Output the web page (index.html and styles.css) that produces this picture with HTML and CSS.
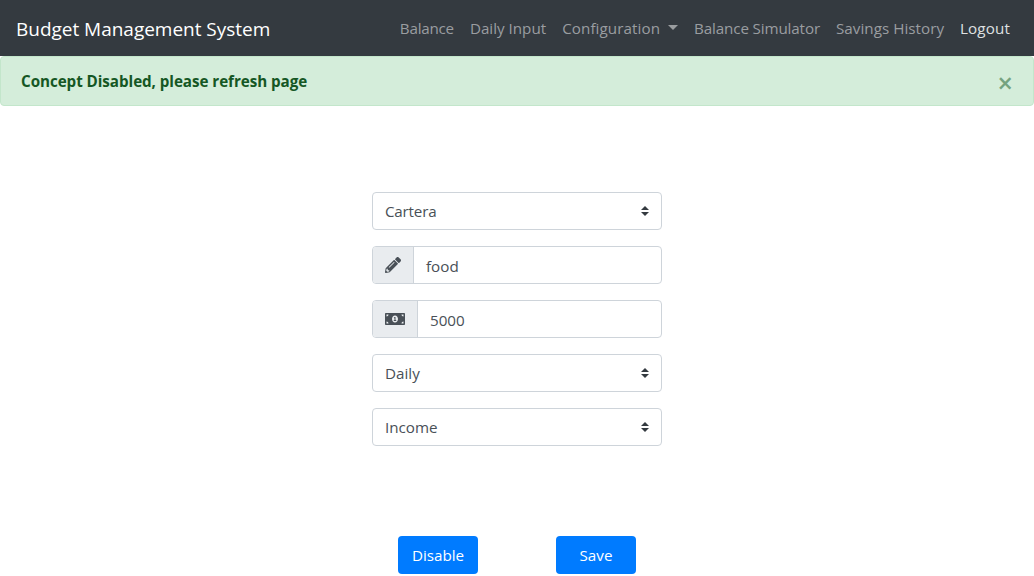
FILE: index.html
```
<!DOCTYPE html>
<html lang="en">
<head>
<meta charset="utf-8">
<title>Budget Management System</title>
<link rel="stylesheet" href="styles.css">
</head>
<body>
<nav class="navbar">
  <a class="brand">Budget Management System</a>
  <ul class="nav">
    <li class="balance">Balance</li>
    <li>Daily Input</li>
    <li class="dropdown">Configuration</li>
    <li class="simulator">Balance Simulator</li>
    <li class="savings">Savings History</li>
    <li class="active">Logout</li>
  </ul>
</nav>
<div class="alert"><strong>Concept Disabled, please refresh page</strong><span class="close">×</span></div>
<form class="form">
  <div class="control select"><span class="tight">Cartera</span><svg class="arrows" viewBox="0 0 4 5"><path d="M2 0L0 2h4zm0 5L0 3h4z"/></svg></div>
  <div class="control group"><span class="addon"><svg width="16" height="16" viewBox="0 0 512 512"><path d="M497.9 142.1l-46.1 46.1c-4.7 4.7-12.3 4.7-17 0l-111-111c-4.7-4.7-4.7-12.3 0-17l46.1-46.1c18.7-18.7 49.1-18.7 67.9 0l60.1 60.1c18.8 18.7 18.8 49.1 0 67.9zM284.2 99.8L21.6 362.4.4 483.9c-2.9 16.4 11.4 30.6 27.8 27.8l121.5-21.3 262.6-262.6c4.7-4.7 4.7-12.3 0-17l-111-111c-4.8-4.7-12.4-4.7-17.1 0zM124.1 339.9c-5.5-5.5-5.5-14.3 0-19.8l154-154c5.5-5.5 14.3-5.5 19.8 0s5.5 14.3 0 19.8l-154 154c-5.5 5.5-14.3 5.5-19.8 0zM88 424h48v36.3l-64.5 11.3-31.1-31.1L51.7 376H88v48z"/></svg></span><span class="value">food</span></div>
  <div class="control group"><span class="addon"><svg width="20" height="16" viewBox="0 0 640 512"><path d="M352 288h-16v-88c0-4.42-3.58-8-8-8h-13.58c-4.74 0-9.37 1.4-13.31 4.03l-15.33 10.22a7.994 7.994 0 0 0-2.22 11.09l8.88 13.31a7.994 7.994 0 0 0 11.09 2.22l.47-.31V288h-16c-4.42 0-8 3.58-8 8v16c0 4.42 3.58 8 8 8h64c4.42 0 8-3.58 8-8v-16c0-4.42-3.58-8-8-8zM608 64H32C14.33 64 0 78.33 0 96v320c0 17.67 14.33 32 32 32h576c17.67 0 32-14.33 32-32V96c0-17.67-14.33-32-32-32zM48 400v-64c35.35 0 64 28.65 64 64H48zm0-224v-64h64c0 35.35-28.65 64-64 64zm272 192c-53.02 0-96-50.15-96-112 0-61.86 42.98-112 96-112s96 50.13 96 112c0 61.87-43 112-96 112zm272 32h-64c0-35.35 28.65-64 64-64v64zm0-224c-35.35 0-64-28.65-64-64h64v64z"/></svg></span><span class="value">5000</span></div>
  <div class="control select"><span>Daily</span><svg class="arrows" viewBox="0 0 4 5"><path d="M2 0L0 2h4zm0 5L0 3h4z"/></svg></div>
  <div class="control select"><span>Income</span><svg class="arrows" viewBox="0 0 4 5"><path d="M2 0L0 2h4zm0 5L0 3h4z"/></svg></div>
  <div class="actions"><button type="button" class="btn">Disable</button><button type="button" class="btn">Save</button></div>
</form>
</body>
</html>
```
FILE: styles.css
```
* { box-sizing: border-box; }
body { margin: 0; background: #fff; color: #212529; font: 15.2px/24px "Open Sans", "Noto Sans", sans-serif; }

.navbar { display: flex; align-items: center; justify-content: space-between; height: 56px; padding: 0 16px; background: #343a40; }
.brand { padding-top: 2px; color: #fff; font-size: 19px; line-height: 30px; letter-spacing: -0.02px; white-space: nowrap; }
.nav { display: flex; margin: 0; padding: 0; list-style: none; color: #9a9da0; white-space: nowrap; }
.nav li { padding: 8px; }
.nav .balance { letter-spacing: -0.23px; }
.nav .simulator { letter-spacing: -0.13px; }
.nav .savings { letter-spacing: 0.03px; }
.nav .active { color: #dfe0e1; letter-spacing: 0.13px; }
.dropdown { letter-spacing: 0.08px; }
.dropdown::after { content: ""; display: inline-block; margin-left: 8px; vertical-align: 4px; border-top: 5px solid; border-left: 5px solid transparent; border-right: 5px solid transparent; }

.alert { display: flex; justify-content: space-between; height: 50px; padding: 12px 20px; border: 1px solid #c3e6cb; border-radius: 4px; background: #d4edda; color: #155724; letter-spacing: -0.05px; }
.close { padding-top: 2px; font-size: 27px; font-weight: 600; color: #75a37f; }

.form { width: 290px; margin: 86px auto 0; }
.control { display: flex; align-items: center; height: 38px; margin-bottom: 16px; border: 1px solid #ced4da; border-radius: 4px; color: #495057; }
.select { justify-content: space-between; padding: 0 12px; }
.tight { letter-spacing: -0.2px; }
.arrows { width: 8px; height: 10px; fill: #343a40; }
.addon { display: flex; align-items: center; height: 36px; padding: 0 12px; border-right: 1px solid #ced4da; border-radius: 3px 0 0 3px; background: #e9ecef; fill: #495057; }
.value { padding: 2px 0 0 12px; }

.actions { display: flex; justify-content: space-between; margin-top: 90px; padding: 0 26px; }
.btn { width: 80px; height: 38px; padding: 0; border: 0; border-radius: 4px; background: #007bff; color: #fff; font: inherit; }
```
